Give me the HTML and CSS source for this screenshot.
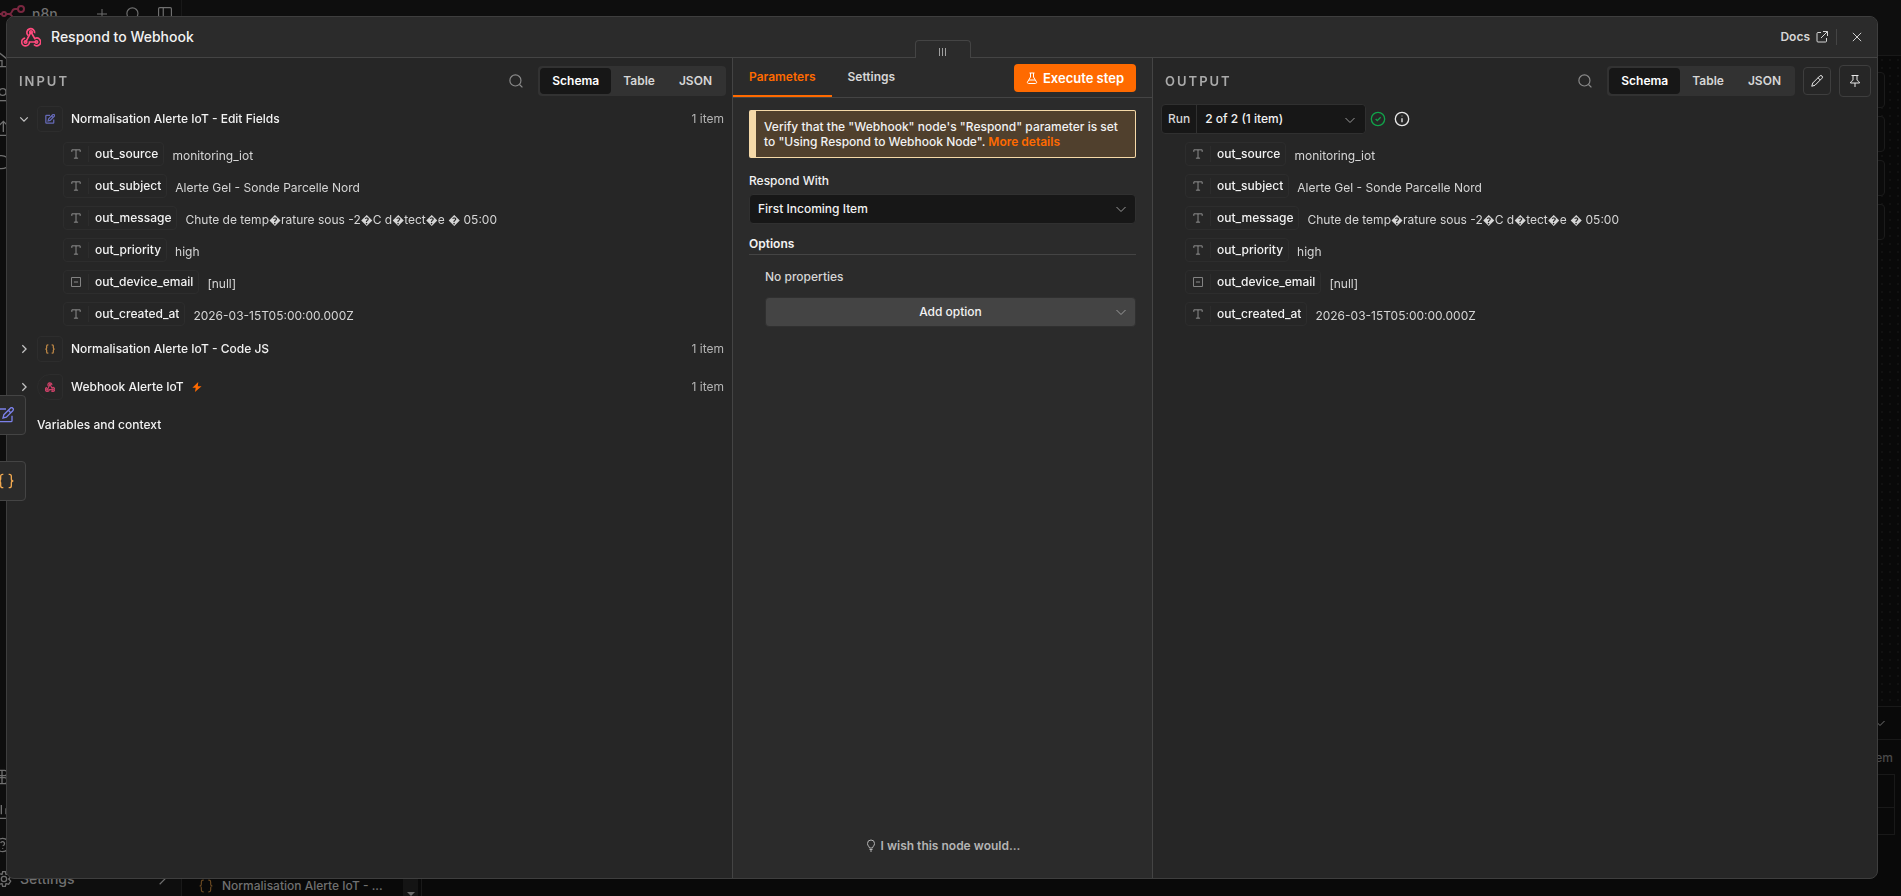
FILE: index.html
```html
<!DOCTYPE html>
<html lang="en">
<head>
    <meta charset="UTF-8">
    <title>Respond to Webhook</title>
    <link rel="stylesheet" href="styles.css">
</head>
<body>
    <!-- Shared icons -->
    <svg class="sprite" aria-hidden="true">
        <symbol id="i-search" viewBox="0 0 24 24"><circle cx="11" cy="11" r="9.500"/><path d="M18 18 L23 23"/></symbol>
        <symbol id="i-down" viewBox="0 0 24 24"><path d="M3 8l9 9 9-9"/></symbol>
        <symbol id="i-right" viewBox="0 0 24 24"><path d="M8 3l9 9-9 9"/></symbol>
        <symbol id="i-text" viewBox="0 0 24 24"><path d="M2 7V2h20v5M12 2v20M7 22h10"/></symbol>
        <symbol id="i-null" viewBox="0 0 24 24"><rect x="1" y="1" width="22" height="22" rx="1"/><path d="M7 12h10"/></symbol>
        <symbol id="i-edit" viewBox="0 0 24 24"><path d="M12 3H3.500A1.500 1.500 0 0 0 2 4.500v16A1.500 1.500 0 0 0 3.500 22h16a1.500 1.500 0 0 0 1.500-1.500V13"/><path d="M18.500 1.800a2.600 2.600 0 0 1 3.700 3.700L12.500 15.200 7.500 16.500l1.300-5z"/><path d="M15.500 4.800l3.700 3.700"/></symbol>
        <symbol id="i-braces" viewBox="0 0 24 24"><path d="M8 2H7a3 3 0 0 0-3 3v4a3 3 0 0 1-3 3 3 3 0 0 1 3 3v4a3 3 0 0 0 3 3h1M16 2h1a3 3 0 0 1 3 3v4a3 3 0 0 0 3 3 3 3 0 0 0-3 3v4a3 3 0 0 1-3 3h-1"/></symbol>
        <symbol id="i-hook" viewBox="0 0 24 24"><path d="M8.600 10.200A4.700 4.700 0 1 1 16.300 7.500"/><circle cx="12" cy="6" r="1.500"/><path d="M12 6L7.500 14.500 5.500 18M12 6l4.500 8a4.600 4.600 0 1 1-1 7"/><path d="M5 13.300A4.700 4.700 0 1 0 10.200 18H18.500"/><circle cx="5.500" cy="18" r="1.500"/><circle cx="18.500" cy="18" r="1.500"/></symbol>
        <symbol id="i-bolt" viewBox="0 0 24 24"><path d="M15 0L1 14h8l-2 10 16-14h-9z"/></symbol>
    </svg>

    <!-- Dimmed editor behind the dialog -->
    <div class="app" aria-hidden="true">
        <div class="sidebar">
            <div class="brand">
                <svg class="brand-logo" viewBox="0 0 34 18"><circle cx="3" cy="9" r="2"/><circle cx="12" cy="9" r="2"/><circle cx="29" cy="4" r="3"/><circle cx="26" cy="14" r="2"/><path d="M5 9h5M14 9h3c4 0 2-5 6-5h3M17 9c4 0 2 5 7 5"/></svg>
                <span class="brand-name">n8n</span>
                <svg class="icon i12" viewBox="0 0 24 24"><path d="M12 2v20M2 12h20"/></svg>
                <svg class="icon i14"><use href="#i-search"/></svg>
                <svg class="icon i14" viewBox="0 0 24 24"><rect x="1" y="1" width="22" height="22" rx="2"/><path d="M9 1v22"/></svg>
            </div>
            <div class="menu menu-top">
                <svg class="icon i16" viewBox="0 0 24 24"><path d="M2 10l10-8 10 8v12H2zM9 22v-9h6v9"/></svg>
                <svg class="icon i16" viewBox="0 0 24 24"><circle cx="16" cy="9" r="5"/><path d="M2 22h20"/></svg>
                <svg class="icon i16" viewBox="0 0 24 24"><path d="M17 18V2M11 8l6-6 6 6M2 23h20"/></svg>
                <svg class="icon i16" viewBox="0 0 24 24"><path d="M22 5c-8-6-16 0-16 0M22 20c-8 4-16 0-16 0"/></svg>
            </div>
            <div class="menu menu-bottom">
                <svg class="icon i16" viewBox="0 0 24 24"><rect x="8" y="2" width="14" height="8" rx="3"/><rect x="8" y="13" width="14" height="9" rx="3"/><path d="M15 2v20"/></svg>
                <svg class="icon i16" viewBox="0 0 24 24"><path d="M14 3v14M21 8v9M2 23h22"/></svg>
                <svg class="icon i16" viewBox="0 0 24 24"><circle cx="16" cy="12" r="10"/><path d="M13 9a3 3 0 1 1 3 4M16 17v1"/></svg>
                <div class="menu-settings">
                    <svg class="icon i16" viewBox="0 0 24 24"><circle cx="12" cy="12" r="4"/><path d="M10 1h4l1 4 4-1 3 5-3 3 3 3-3 5-4-1-1 4h-4l-1-4-4 1-3-5 3-3-3-3 3-5 4 1z"/></svg>
                    <span>Settings</span>
                    <svg class="icon i14"><use href="#i-right"/></svg>
                </div>
            </div>
        </div>
        <div class="workspace">
            <div class="topbar"></div>
            <div class="canvas">
                <span class="tool"></span>
                <span class="tool"></span>
                <span class="tool"></span>
                <span class="tool"></span>
            </div>
            <div class="logs">
                <div class="logs-head"><svg class="icon i12"><use href="#i-down"/></svg></div>
                <div class="logs-body">
                    <div class="logs-list">
                        <div class="logs-item">
                            <svg class="icon i14"><use href="#i-braces"/></svg>
                            <span>Normalisation Alerte IoT - ...</span>
                        </div>
                        <div class="logs-scroll"><i></i></div>
                    </div>
                    <div class="logs-data">
                        <div class="logs-count">1 item</div>
                        <div class="logs-row"></div>
                        <div class="logs-row last"></div>
                    </div>
                </div>
            </div>
        </div>
    </div>

    <div class="dialog" role="dialog" aria-labelledby="dialog-title">
        <header class="dialog-head">
            <svg class="icon i20 c-pink"><use href="#i-hook"/></svg>
            <h1 id="dialog-title">Respond to Webhook</h1>
            <a class="docs" href="#">Docs
                <svg class="icon i12" viewBox="0 0 24 24"><path d="M10 3H4a2 2 0 0 0-2 2v15a2 2 0 0 0 2 2h15a2 2 0 0 0 2-2v-6M14 1h9v9M23 1L10 14"/></svg>
            </a>
            <button class="close" aria-label="Close"><svg class="icon i10" viewBox="0 0 24 24"><path d="M2 2l20 20M22 2L2 22"/></svg></button>
        </header>

        <div class="panels">
            <section class="panel input">
                <div class="panel-head">
                    <h2>Input</h2>
                    <button class="plain" aria-label="Search input"><svg class="icon i14"><use href="#i-search"/></svg></button>
                    <div class="views">
                        <button class="active">Schema</button>
                        <button>Table</button>
                        <button>JSON</button>
                    </div>
                </div>

                <div class="node open">
                    <svg class="icon i10 arrow"><use href="#i-down"/></svg>
                    <span class="node-icon"><svg class="icon i10 c-violet"><use href="#i-edit"/></svg></span>
                    <span class="node-name">Normalisation Alerte IoT - Edit Fields</span>
                    <span class="count">1 item</span>
                </div>
                <ul class="schema">
                    <li><span class="pill"><svg class="icon i10"><use href="#i-text"/></svg><b>out_source</b></span><span class="value">monitoring_iot</span></li>
                    <li><span class="pill"><svg class="icon i10"><use href="#i-text"/></svg><b>out_subject</b></span><span class="value">Alerte Gel - Sonde Parcelle Nord</span></li>
                    <li><span class="pill"><svg class="icon i10"><use href="#i-text"/></svg><b>out_message</b></span><span class="value">Chute de temp�rature sous -2�C d�tect�e � 05:00</span></li>
                    <li><span class="pill"><svg class="icon i10"><use href="#i-text"/></svg><b>out_priority</b></span><span class="value">high</span></li>
                    <li><span class="pill"><svg class="icon i10"><use href="#i-null"/></svg><b>out_device_email</b></span><span class="value">[null]</span></li>
                    <li><span class="pill"><svg class="icon i10"><use href="#i-text"/></svg><b>out_created_at</b></span><span class="value">2026-03-15T05:00:00.000Z</span></li>
                </ul>
                <div class="node">
                    <svg class="icon i10 arrow"><use href="#i-right"/></svg>
                    <span class="node-icon"><svg class="icon i10 c-amber"><use href="#i-braces"/></svg></span>
                    <span class="node-name">Normalisation Alerte IoT - Code JS</span>
                    <span class="count">1 item</span>
                </div>
                <div class="node">
                    <svg class="icon i10 arrow"><use href="#i-right"/></svg>
                    <span class="node-icon trigger"><svg class="icon i10 c-pink"><use href="#i-hook"/></svg></span>
                    <span class="node-name">Webhook Alerte IoT</span>
                    <svg class="bolt"><use href="#i-bolt"/></svg>
                    <span class="count">1 item</span>
                </div>
                <div class="node context">
                    <span class="node-name">Variables and context</span>
                </div>
            </section>

            <section class="panel params">
                <div class="drag"><i></i><i></i><i></i></div>
                <div class="tabs">
                    <button class="tab active">Parameters</button>
                    <button class="tab">Settings</button>
                    <button class="execute">
                        <svg class="icon i12" viewBox="0 0 24 24"><path d="M7 2h10M9 2v8L3 20a2 2 0 0 0 2 3h14a2 2 0 0 0 2-3L15 10V2M6 16h12"/></svg>
                        Execute step
                    </button>
                </div>
                <div class="form">
                    <p class="callout">Verify that the "Webhook" node's "Respond" parameter is set to "Using Respond to Webhook Node". <a href="#">More details</a></p>
                    <label for="respond-with">Respond With</label>
                    <div class="select">
                        <select id="respond-with"><option>First Incoming Item</option></select>
                        <svg class="icon i12"><use href="#i-down"/></svg>
                    </div>
                    <h3>Options</h3>
                    <div class="options">
                        <p>No properties</p>
                        <div class="select add">
                            <select aria-label="Add option"><option>Add option</option></select>
                            <svg class="icon i12"><use href="#i-down"/></svg>
                        </div>
                    </div>
                </div>
                <a class="wish" href="#">
                    <svg class="icon i12" viewBox="0 0 24 24"><path d="M9 16c0-3-4-4-4-9a7 7 0 0 1 14 0c0 5-4 6-4 9zM9 19h6M10 22h4"/></svg>
                    I wish this node would...
                </a>
            </section>

            <section class="panel output">
                <div class="panel-head">
                    <h2>Output</h2>
                    <button class="plain" aria-label="Search output"><svg class="icon i14"><use href="#i-search"/></svg></button>
                    <div class="views">
                        <button class="active">Schema</button>
                        <button>Table</button>
                        <button>JSON</button>
                    </div>
                    <button class="square" aria-label="Edit output"><svg class="icon i12" viewBox="0 0 24 24"><path d="M17.500 2a3 3 0 0 1 4.500 4.500L8 20.500 1.500 22.500 3.500 16zM14 5.500l4.500 4.500"/></svg></button>
                    <button class="square big" aria-label="Pin data"><svg class="icon i12" viewBox="0 0 24 24"><path d="M5 1h14M8 1v9c0 2-5 2-5 6h18c0-4-5-4-5-6V1M12 16v8"/></svg></button>
                </div>
                <div class="run">
                    <div class="run-box">
                        <label for="run">Run</label>
                        <div class="select">
                            <select id="run"><option>2 of 2 (1 item)</option></select>
                            <svg class="icon i12"><use href="#i-down"/></svg>
                        </div>
                    </div>
                    <svg class="icon i16 c-green" viewBox="0 0 24 24"><circle cx="12" cy="12" r="10"/><path d="M8.500 12l2.500 2.500 5-5"/></svg>
                    <svg class="icon i16 info" viewBox="0 0 24 24"><circle cx="12" cy="12" r="10"/><path d="M12 11v6M12 7v1"/></svg>
                </div>
                <ul class="schema">
                    <li><span class="pill"><svg class="icon i10"><use href="#i-text"/></svg><b>out_source</b></span><span class="value">monitoring_iot</span></li>
                    <li><span class="pill"><svg class="icon i10"><use href="#i-text"/></svg><b>out_subject</b></span><span class="value">Alerte Gel - Sonde Parcelle Nord</span></li>
                    <li><span class="pill"><svg class="icon i10"><use href="#i-text"/></svg><b>out_message</b></span><span class="value">Chute de temp�rature sous -2�C d�tect�e � 05:00</span></li>
                    <li><span class="pill"><svg class="icon i10"><use href="#i-text"/></svg><b>out_priority</b></span><span class="value">high</span></li>
                    <li><span class="pill"><svg class="icon i10"><use href="#i-null"/></svg><b>out_device_email</b></span><span class="value">[null]</span></li>
                    <li><span class="pill"><svg class="icon i10"><use href="#i-text"/></svg><b>out_created_at</b></span><span class="value">2026-03-15T05:00:00.000Z</span></li>
                </ul>
            </section>
        </div>
    </div>

    <!-- Shortcuts to the previous nodes -->
    <nav class="floating">
        <button aria-label="Normalisation Alerte IoT - Edit Fields"><svg class="icon i16 c-violet"><use href="#i-edit"/></svg></button>
        <button aria-label="Normalisation Alerte IoT - Code JS"><svg class="icon i16 c-amber"><use href="#i-braces"/></svg></button>
    </nav>
</body>
</html>
```
FILE: styles.css
```css
* {
    box-sizing: border-box;
}
body {
    margin: 0;
    height: 100vh;
    overflow: hidden;
    background: #090909;
    color: #e8e8e8;
    font-family: Inter, "Noto Sans", sans-serif;
    font-size: 12px;
    font-weight: 500;
    line-height: 16px;
}
h1, h2, h3, p, ul {
    margin: 0;
    padding: 0;
}
button, select {
    font: inherit;
    color: inherit;
    border: 0;
    padding: 0;
    background: none;
}
a {
    color: inherit;
    text-decoration: none;
}

/* icons */
.sprite {
    position: absolute;
    width: 0;
    height: 0;
}
.icon {
    flex: none;
    display: block;
    fill: none;
    stroke: currentColor;
    stroke-width: 2;
    overflow: visible;
}
.i10 {
    width: 10px;
    height: 10px;
    stroke-width: 3;
}
.i12 { width: 12px; height: 12px; }
.i14 { width: 14px; height: 14px; }
.i16 { width: 16px; height: 16px; }
.i20 { width: 20px; height: 20px; }
.c-pink { color: #ff4a7d; }
.c-violet { color: #7b80e8; }
.c-amber { color: #f0a850; }
.c-green { color: #11a34a; }

/* dimmed editor */
.app {
    display: flex;
    height: 100vh;
    color: #707070;
}
.sidebar {
    width: 182px;
    display: flex;
    flex-direction: column;
    border-right: 1px solid #191919;
    background: #0e0e0e;
}
.brand {
    display: flex;
    align-items: center;
    gap: 18px;
    height: 28px;
    margin-left: -8px;
}
.brand-logo {
    width: 34px;
    height: 18px;
    fill: none;
    stroke: #7a2740;
    stroke-width: 2;
}
.brand-name {
    margin-left: -12px;
    margin-right: 20px;
    font-size: 14px;
}
.menu {
    display: flex;
    flex-direction: column;
    margin-left: -8px;
}
.menu-top {
    gap: 18px;
    padding-top: 24px;
}
.menu-bottom {
    gap: 18px;
    margin-top: auto;
    padding-bottom: 9px;
}
.menu-settings {
    display: flex;
    align-items: center;
    font-size: 14px;
    margin-left: 4px;
}
.menu-settings span {
    flex: 1;
    margin-left: 8px;
}
.menu-settings .i14 {
    margin-right: 12px;
}
.workspace {
    flex: 1;
    display: flex;
    flex-direction: column;
}
.topbar {
    height: 56px;
    background: #0e0e0e;
    border-bottom: 1px solid #191919;
}
.canvas {
    flex: 1;
    display: flex;
    flex-direction: column;
    align-items: flex-end;
    gap: 8px;
    padding: 16px;
    background: radial-gradient(circle, #111 1px, transparent 1px) 0 0 / 8px 8px;
}
.tool {
    width: 36px;
    height: 36px;
    border: 1px solid #1b1b1b;
    border-radius: 4px;
    background: #0b0b0b;
}
.logs {
    height: 190px;
    display: flex;
    flex-direction: column;
    border-top: 1px solid #191919;
    background: #090909;
}
.logs-head {
    display: flex;
    align-items: center;
    justify-content: flex-end;
    height: 33px;
    padding-right: 15px;
    border-bottom: 1px solid #191919;
}
.logs-body {
    flex: 1;
    display: flex;
}
.logs-list {
    width: 240px;
    display: flex;
    align-items: flex-end;
    border-right: 1px solid #191919;
}
.logs-item {
    flex: 1;
    display: flex;
    align-items: center;
    gap: 9px;
    padding: 0 0 2px 17px;
}
.logs-item .icon {
    color: #6b4a22;
}
.logs-scroll {
    align-self: stretch;
    display: flex;
    justify-content: center;
    align-items: flex-end;
    width: 15px;
    background: #141414;
    margin-right: 3px;
}
.logs-scroll i {
    border: 4px solid transparent;
    border-top-color: #6a6a6a;
    border-bottom: 0;
}
.logs-data {
    flex: 1;
    padding-right: 6px;
}
.logs-count {
    height: 34px;
    padding: 10px 2px;
    text-align: right;
    color: #4a4a4a;
}
.logs-row {
    height: 33px;
    border: 1px solid #191919;
    border-bottom: 0;
}
.logs-row.last {
    height: 28px;
    border-bottom: 1px solid #191919;
}

/* dialog */
.dialog {
    position: fixed;
    inset: 16px 23px 17px 6px;
    display: flex;
    flex-direction: column;
    border: 1px solid #3e3e3e;
    border-radius: 8px;
    overflow: hidden;
    background: #262626;
}
.dialog-head {
    display: flex;
    align-items: center;
    height: 41px;
    padding: 0 15px 0 14px;
    border-bottom: 1px solid #444;
    background: #2b2b2b;
}
.dialog-head h1 {
    flex: 1;
    margin-left: 10px;
    font-size: 14px;
    font-weight: 500;
    color: #f2f2f2;
}
.docs {
    display: flex;
    align-items: center;
    gap: 6px;
    padding-right: 8px;
    border-right: 1px solid #444;
    font-weight: 600;
    color: #d6d6d6;
}
.close {
    margin-left: 15px;
    color: #f2f2f2;
}
.close .icon {
    stroke-width: 2;
}
.panels {
    flex: 1;
    display: grid;
    grid-template-columns: 725fr 421px 724fr;
}
.panel {
    min-width: 0;
}
.panel-head {
    display: flex;
    align-items: center;
    height: 46px;
    padding-left: 12px;
    padding-right: 6px;
}
.output .panel-head {
    gap: 8px;
}
.panel-head h2 {
    flex: 1;
    font-size: 13px;
    font-weight: 600;
    letter-spacing: 2px;
    text-transform: uppercase;
    color: #aaa;
}
.plain {
    margin-right: 15px;
    color: #8a8a8a;
}
.output .plain {
    margin-right: 7px;
}
.views {
    display: flex;
    padding: 2px;
    border-radius: 4px;
    background: #323232;
    font-weight: 600;
    color: #d6d6d6;
}
.views button {
    height: 26px;
    padding: 0 12px;
    border-radius: 4px;
}
.views .active {
    background: #171717;
    color: #fff;
}
.square {
    display: grid;
    place-items: center;
    width: 28px;
    height: 28px;
    border: 1px solid #3e3e3e;
    border-radius: 4px;
}
.square.big {
    width: 32px;
    height: 32px;
}

/* schema */
.node {
    display: flex;
    align-items: center;
    height: 26px;
    margin-bottom: 12px;
    padding: 0 8px 0 12px;
}
.node.open {
    margin-top: 2px;
    margin-bottom: 10px;
}
.arrow {
    color: #c4c4c4;
}
.node-icon {
    display: grid;
    place-items: center;
    width: 26px;
    height: 26px;
    margin: 0 8px;
    border: 1px solid #2d2d2d;
    border-radius: 4px;
}
.node-icon .icon {
    opacity: 0.75;
}
.node-icon.trigger {
    border-radius: 13px 4px 4px 13px;
}
.node-name {
    color: #f2f2f2;
}
.bolt {
    width: 10px;
    height: 10px;
    margin-left: 8px;
    fill: #ff6a00;
}
.count {
    margin-left: auto;
    font-weight: 400;
    color: #b4b4b4;
}
.context {
    padding-left: 30px;
}
.schema {
    list-style: none;
    padding-left: 56px;
}
.schema li {
    display: flex;
    align-items: center;
    height: 24px;
    margin-bottom: 8px;
}
.input .schema {
    margin-bottom: 10px;
}
.output .schema {
    padding-left: 32px;
}
.pill {
    display: flex;
    align-items: center;
    height: 24px;
    padding-right: 5px;
    border: 1px solid #2d2d2d;
    border-radius: 4px;
    color: #a0a0a0;
}
.pill .icon {
    margin: 0 7px;
    stroke-width: 2;
}
.pill b {
    padding-left: 6px;
    border-left: 1px solid #2d2d2d;
    font-weight: 500;
    color: #f2f2f2;
}
.value {
    margin-left: 8px;
    padding-top: 3px;
    font-weight: 400;
    color: #d6d6d6;
}

/* parameters */
.params {
    position: relative;
    display: flex;
    flex-direction: column;
    border-left: 1px solid #444;
    border-right: 1px solid #444;
    background: #2b2b2b;
}
.drag {
    position: absolute;
    top: -18px;
    left: 50%;
    transform: translateX(-50%);
    display: flex;
    justify-content: center;
    align-items: center;
    gap: 2px;
    width: 56px;
    height: 18px;
    padding-top: 4px;
    border: 1px solid #444;
    border-bottom: 0;
    border-radius: 4px 4px 0 0;
    background: #2b2b2b;
}
.drag i {
    width: 1px;
    height: 8px;
    background: #a0a0a0;
}
.tabs {
    display: flex;
    align-items: flex-start;
    height: 40px;
    padding-right: 16px;
    border-bottom: 1px solid #444;
    font-weight: 600;
    color: #d6d6d6;
}
.tab {
    height: 39px;
    padding: 0 16px;
    border-bottom: 2px solid transparent;
}
.tab.active {
    border-color: #ff6a00;
    color: #ff6a00;
}
.execute {
    display: flex;
    align-items: center;
    gap: 5px;
    height: 28px;
    margin: 6px 0 0 auto;
    padding: 0 12px;
    border-radius: 4px;
    background: #ff6a00;
    color: #fff;
    font-size: 13px;
}
.form {
    flex: 1;
    display: flex;
    flex-direction: column;
    padding: 12px 16px;
}
.callout {
    padding: 8px 16px 8px 8px;
    border: 1px solid #f5d9a8;
    border-left-width: 7px;
    border-radius: 2px;
    background: #50402d;
    line-height: 15px;
    color: #f2f2f2;
}
.callout a {
    font-weight: 600;
    color: #ff6a00;
}
.form label {
    margin: 15px 0 5px;
    color: #f2f2f2;
}
.select {
    position: relative;
}
.select select {
    appearance: none;
    display: block;
    width: 100%;
    height: 30px;
    padding: 0 8px;
    border: 1px solid #303030;
    border-radius: 4px;
    background: #171717;
    color: #f2f2f2;
}
.select .icon {
    position: absolute;
    right: 9px;
    top: 9px;
    color: #9a9a9a;
    pointer-events: none;
}
.form h3 {
    margin-top: 12px;
    padding-bottom: 2px;
    border-bottom: 1px solid #444;
    font-size: 12px;
    font-weight: 600;
    color: #f2f2f2;
}
.options {
    padding: 14px 0 0 16px;
}
.options p {
    margin-bottom: 12px;
    color: #d6d6d6;
}
.select.add select {
    background: #444;
    text-align-last: center;
}
.wish {
    display: flex;
    justify-content: center;
    align-items: center;
    gap: 4px;
    margin-bottom: 24px;
    font-weight: 600;
    color: #b4b4b4;
}

/* output run selector */
.run {
    display: flex;
    align-items: center;
    gap: 8px;
    height: 30px;
    margin: 0 0 8px 8px;
}
.run-box {
    display: flex;
    width: 205px;
    height: 30px;
    border: 1px solid #303030;
    border-radius: 4px;
    background: #171717;
    color: #d6d6d6;
}
.run-box label {
    padding: 6px;
    border-right: 1px solid #303030;
}
.run-box .select {
    flex: 1;
}
.run-box .select select {
    height: 28px;
    border: 0;
}
.run .c-green {
    margin-left: -4px;
}
.info {
    color: #e8e8e8;
}

/* floating node buttons */
.floating {
    position: fixed;
    left: 0;
    top: 395px;
    display: grid;
    gap: 26px;
    margin-left: -14px;
}
.floating button {
    display: grid;
    place-items: center;
    width: 40px;
    height: 40px;
    border: 1px solid #444;
    border-radius: 4px;
    background: #2b2b2b;
}
```
